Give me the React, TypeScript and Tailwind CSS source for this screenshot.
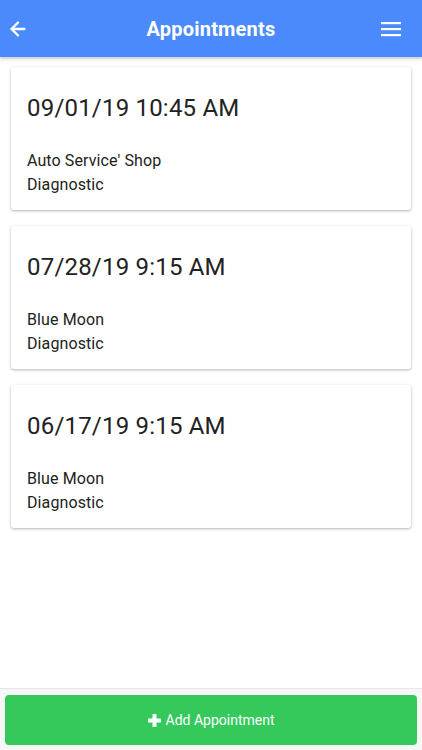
import React from "react";
import { ArrowLeft } from "lucide-react";

const appointments = [
  { date: "09/01/19 10:45 AM", shop: "Auto Service' Shop", service: "Diagnostic" },
  { date: "07/28/19 9:15 AM", shop: "Blue Moon", service: "Diagnostic" },
  { date: "06/17/19 9:15 AM", shop: "Blue Moon", service: "Diagnostic" },
];

export default function App() {
  return (
    <div
      className="w-[422px] h-[750px] flex flex-col bg-white overflow-hidden"
      style={{ fontFamily: "Roboto, 'Liberation Sans', sans-serif" }}
    >
      {/* Header */}
      <div className="h-[57px] shrink-0 bg-[#4a8afd] flex items-center shadow-[0_2px_3px_rgba(0,0,0,0.2)] relative z-10">
        <div className="w-[60px] pl-[7px] flex items-center">
          <ArrowLeft size={22} strokeWidth={2.5} className="text-white" />
        </div>
        <h1 className="flex-1 text-center text-white text-[20px] font-bold tracking-[0.2px]">Appointments</h1>
        <div className="w-[60px] pr-[21px] flex items-center justify-end">
          <svg width="20" height="16" viewBox="0 0 20 16" className="text-white">
            <rect x="0" y="1" width="20" height="2.2" fill="currentColor" />
            <rect x="0" y="7" width="20" height="2.2" fill="currentColor" />
            <rect x="0" y="13" width="20" height="2.2" fill="currentColor" />
          </svg>
        </div>
      </div>

      {/* List */}
      <div className="flex-1 flex flex-col gap-4 px-[11px] pt-[10px]">
        {appointments.map((a, i) => (
          <div
            key={i}
            className="h-[143px] bg-white rounded-[3px] shadow-[0_1px_3px_rgba(0,0,0,0.3)] px-4 pt-[25px] flex flex-col"
          >
            <div className="text-[24px] leading-8 tracking-[0.2px] text-[#222]">{a.date}</div>
            <div className="mt-[25px] text-[16px] leading-6 tracking-[0.1px] text-[#222]">
              <div>{a.shop}</div>
              <div>{a.service}</div>
            </div>
          </div>
        ))}
      </div>

      {/* Footer */}
      <div className="h-[62px] shrink-0 bg-[#f7f7f8] border-t border-[#e6e6e8] px-[5px] pt-[6px]">
        <button className="w-full h-[50px] rounded-[4px] bg-[#35c95b] text-white flex items-center justify-center gap-[5px] text-[14px]">
          <svg width="13" height="13" viewBox="0 0 13 13">
            <rect x="4.5" y="0" width="4" height="13" rx="0.6" fill="currentColor" />
            <rect x="0" y="4.5" width="13" height="4" rx="0.6" fill="currentColor" />
          </svg>
          <span>Add Appointment</span>
        </button>
      </div>
    </div>
  );
}
